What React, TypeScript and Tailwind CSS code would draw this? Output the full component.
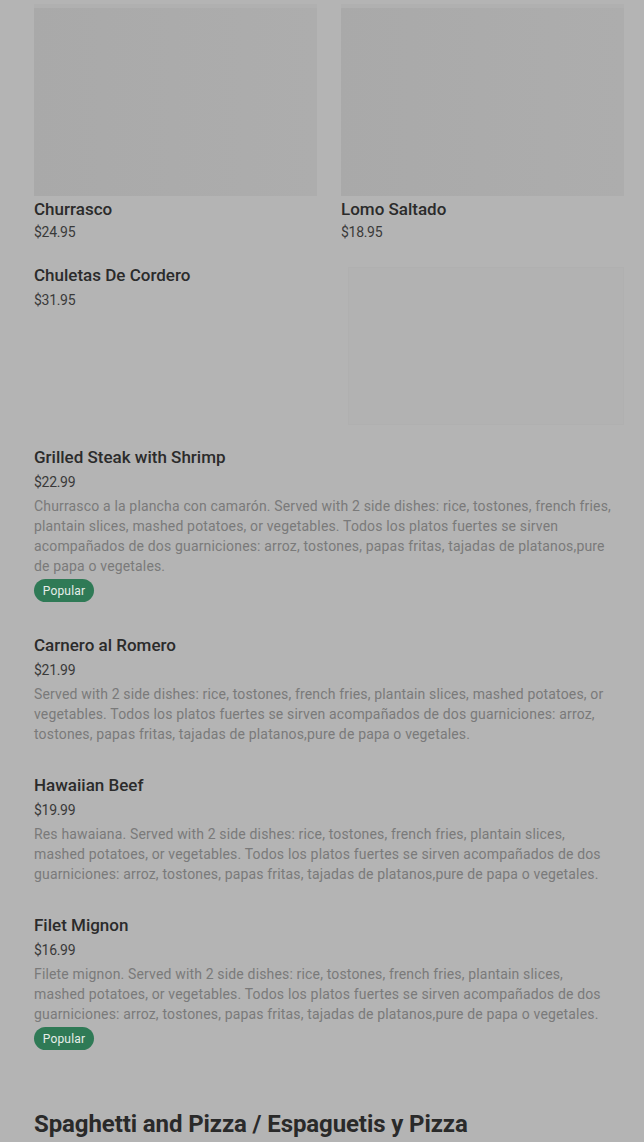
import { FC } from "react";

interface Dish {
  name: string;
  price: string;
  desc?: string;
  popular?: boolean;
}

const SIDES =
  "Served with 2 side dishes: rice, tostones, french fries, plantain slices, mashed potatoes, or vegetables. Todos los platos fuertes se sirven acompañados de dos guarniciones: arroz, tostones, papas fritas, tajadas de platanos,pure de papa o vegetales.";

const dishes: Dish[] = [
  {
    name: "Grilled Steak with Shrimp",
    price: "$22.99",
    desc: "Churrasco a la plancha con camarón. " + SIDES,
    popular: true,
  },
  { name: "Carnero al Romero", price: "$21.99", desc: SIDES },
  { name: "Hawaiian Beef", price: "$19.99", desc: "Res hawaiana. " + SIDES },
  {
    name: "Filet Mignon",
    price: "$16.99",
    desc: "Filete mignon. " + SIDES,
    popular: true,
  },
];

const Placeholder: FC<{ className?: string }> = ({ className = "" }) => (
  <div
    className={`bg-gradient-to-r from-[#a9a9a9] via-[#ababab] to-[#adadad] ${className}`}
  />
);

const GridCard: FC<{ name: string; price: string }> = ({ name, price }) => (
  <div className="flex flex-col">
    <div className="border-t-4 border-[#b0b0b0]">
      <Placeholder className="h-[188px] w-full" />
    </div>
    <div className="mt-[1px] text-[17px] font-medium leading-6 text-[#2b2b2b]">{name}</div>
    <div className="mt-[1px] text-[14px] leading-5 tracking-[-0.3px] text-[#3a3a3a]">{price}</div>
  </div>
);

const Badge: FC = () => (
  <span className="mb-[2px] mt-[3px] inline-flex h-[23px] w-[60px] items-center justify-center rounded-full bg-[#2f7a56] text-[12px] tracking-[0.2px] text-[#e6eee9]">
    Popular
  </span>
);

const ListItem: FC<{ dish: Dish }> = ({ dish }) => (
  <div className="flex flex-col items-start">
    <div className="text-[17px] font-medium leading-6 text-[#2b2b2b]">{dish.name}</div>
    <div className="mt-[3px] text-[14px] leading-5 tracking-[-0.3px] text-[#3a3a3a]">{dish.price}</div>
    <p className="mt-1 pr-[10px] text-[14px] leading-5 tracking-[0.16px] text-[#7a7a7a]">{dish.desc}</p>
    {dish.popular && <Badge />}
  </div>
);

const App: FC = () => {
  return (
    <div
      className="min-h-[1142px] w-full overflow-hidden bg-[#b4b4b4] pl-[34px] pr-[20px] pt-1"
      style={{ fontFamily: "Roboto, 'Liberation Sans', sans-serif" }}
    >
      <div className="grid grid-cols-2 gap-x-6">
        <GridCard name="Churrasco" price="$24.95" />
        <GridCard name="Lomo Saltado" price="$18.95" />
      </div>

      <div className="mt-[21px] flex justify-between">
        <div className="flex flex-col">
          <div className="text-[17px] font-medium leading-6 text-[#2b2b2b]">
            Chuletas De Cordero
          </div>
          <div className="mt-[3px] text-[14px] leading-5 tracking-[-0.3px] text-[#3a3a3a]">$31.95</div>
        </div>
        <div className="mt-1 h-[158px] w-[276px] border border-[#b0b0b0] bg-[#b2b2b2]" />
      </div>

      <div className="mt-[20px] flex flex-col gap-[29px]">
        {dishes.map((d) => (
          <ListItem key={d.name} dish={d} />
        ))}
      </div>

      <h2 className="mt-[56px] text-[24px] font-bold leading-8 tracking-[-0.1px] text-[#2a2a2a]">
        Spaghetti and Pizza / Espaguetis y Pizza
      </h2>
    </div>
  );
};

export default App;
